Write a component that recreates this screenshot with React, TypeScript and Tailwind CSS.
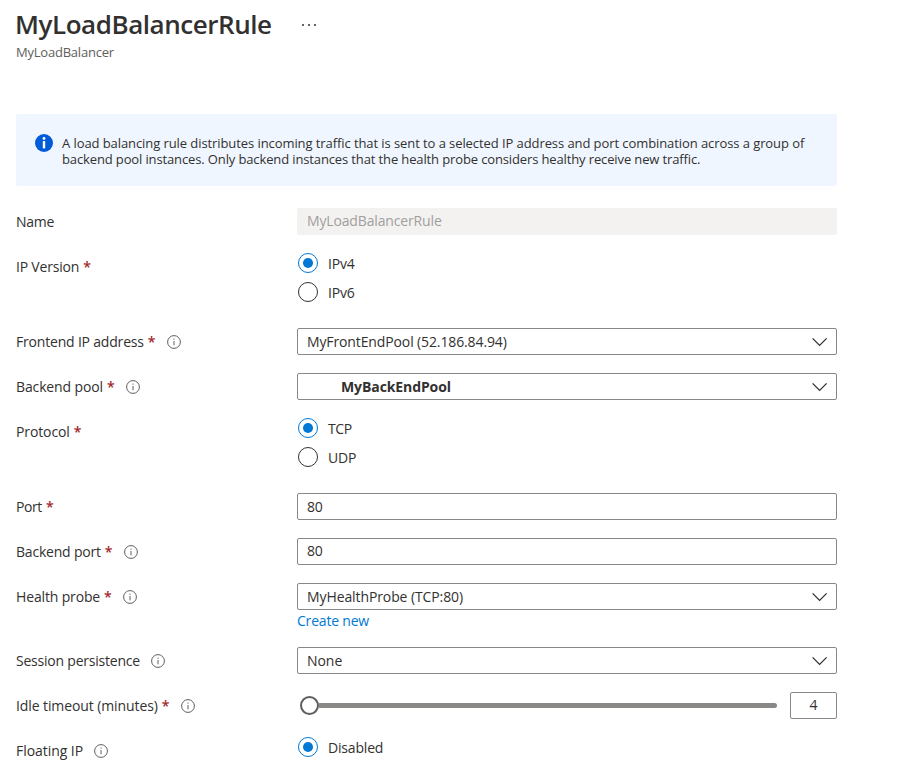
import type { ReactNode } from "react";

function InfoGlyph() {
  return (
    <svg width="14" height="14" viewBox="0 0 14 14" className="ml-[11px] shrink-0" fill="none">
      <circle cx="7" cy="7" r="6.4" stroke="#605e5c" strokeWidth="1" />
      <path d="M7 6v4.3" stroke="#605e5c" strokeWidth="1" />
      <circle cx="7" cy="4.1" r="0.7" fill="#605e5c" />
    </svg>
  );
}

function Row({
  label,
  tracking,
  required,
  info,
  children,
}: {
  label: string;
  tracking: string;
  required?: boolean;
  info?: boolean;
  children: ReactNode;
}) {
  return (
    <div className="grid grid-cols-[281px_540px] items-start">
      <div className="flex h-[27px] items-center whitespace-nowrap">
        <span className={tracking}>{label}</span>
        {required && <span className="ml-1 w-2 font-semibold text-[#a4262c]">*</span>}
        {info && <InfoGlyph />}
      </div>
      <div>{children}</div>
    </div>
  );
}

function Radio({ label, checked, tracking }: { label: string; checked?: boolean; tracking: string }) {
  return (
    <div className="ml-px flex h-5 items-center">
      <span
        className={
          checked
            ? "flex size-5 items-center justify-center rounded-full border border-[#0078d4]"
            : "flex size-5 items-center justify-center rounded-full border border-[#323130]"
        }
      >
        {checked && <span className="size-[10px] rounded-full bg-[#0078d4]" />}
      </span>
      <span className={`ml-[10px] pt-px ${tracking}`}>{label}</span>
    </div>
  );
}

function Box({ children }: { children: ReactNode }) {
  return (
    <div className="flex h-[27px] items-center rounded-[2px] border border-[#8a8886] pr-2 pl-[9px] leading-[25px]">
      {children}
    </div>
  );
}

function Select({ children }: { children: ReactNode }) {
  return (
    <Box>
      {children}
      <svg width="16" height="10" viewBox="0 0 16 10" fill="none" className="ml-auto shrink-0">
        <path d="M0.6 1.4l7 7 7-7" stroke="#323130" strokeWidth="1.3" />
      </svg>
    </Box>
  );
}

export default function App() {
  return (
    <div className="h-[760px] w-[917px] overflow-hidden bg-white pl-4 font-['Open_Sans','Noto_Sans',sans-serif] text-sm text-[#323130]">
      <header className="h-[114px] pt-2">
        <div className="flex h-[33px] items-center">
          <h1 className="-ml-px text-[26px] leading-[33px] font-semibold tracking-[-0.45px]">MyLoadBalancerRule</h1>
          <div className="mt-px ml-[30px] flex gap-1">
            <span className="size-[2px] rounded-full bg-[#323130]" />
            <span className="size-[2px] rounded-full bg-[#323130]" />
            <span className="size-[2px] rounded-full bg-[#323130]" />
          </div>
        </div>
        <p className="mt-[2px] text-[13px] leading-[18px] tracking-[-0.22px] text-[#605e5c]">MyLoadBalancer</p>
      </header>

      <section className="flex h-[72px] w-[821px] rounded-[2px] bg-[#f0f6ff] pt-[21px] pl-[19px]">
        <svg width="18" height="18" viewBox="0 0 18 18" className="-mt-px shrink-0">
          <circle cx="9" cy="9" r="9" fill="#015cda" />
          <rect x="7.8" y="7" width="2.4" height="7.4" fill="#fff" />
          <circle cx="9" cy="4.5" r="1.4" fill="#fff" />
        </svg>
        <p className="ml-[9px] text-[13px] leading-4 whitespace-nowrap">
          <span className="tracking-[-0.08px]">
            A load balancing rule distributes incoming traffic that is sent to a selected IP address and port combination across a group of
          </span>
          <br />
          <span className="tracking-[-0.128px]">
            backend pool instances. Only backend instances that the health probe considers healthy receive new traffic.
          </span>
        </p>
      </section>

      <main className="mt-[22px] flex flex-col gap-[18px]">
        <Row label="Name" tracking="tracking-[-0.3px]">
          <div className="h-[27px] rounded-[2px] bg-[#f3f2f1] pl-[10px] leading-[26px] tracking-[-0.15px] text-[#a19f9d]">
            MyLoadBalancerRule
          </div>
        </Row>
        <Row label="IP Version" tracking="tracking-[-0.2px]" required>
          <div className="flex h-[57px] flex-col gap-[9px]">
            <Radio label="IPv4" tracking="tracking-[-0.2px]" checked />
            <Radio label="IPv6" tracking="tracking-[-0.2px]" />
          </div>
        </Row>
        <Row label="Frontend IP address" tracking="tracking-[-0.19px]" required info>
          <Select>
            <span className="tracking-[-0.122px]">MyFrontEndPool (52.186.84.94)</span>
          </Select>
        </Row>
        <Row label="Backend pool" tracking="tracking-[-0.131px]" required info>
          <Select>
            <span className="ml-[34px] font-bold tracking-[-0.1px]">MyBackEndPool</span>
          </Select>
        </Row>
        <Row label="Protocol" tracking="tracking-[-0.115px]" required>
          <div className="flex h-[57px] flex-col gap-[9px]">
            <Radio label="TCP" tracking="tracking-[-0.4px]" checked />
            <Radio label="UDP" tracking="tracking-[-0.2px]" />
          </div>
        </Row>
        <Row label="Port" tracking="tracking-[-0.4px]" required>
          <Box>
            <span className="tracking-[-0.2px]">80</span>
          </Box>
        </Row>
        <Row label="Backend port" tracking="tracking-[-0.204px]" required info>
          <Box>
            <span className="pb-[2px] tracking-[-0.2px]">80</span>
          </Box>
        </Row>
        <Row label="Health probe" tracking="tracking-[-0.15px]" required info>
          <Select>
            <span className="tracking-[-0.099px]">MyHealthProbe (TCP:80)</span>
          </Select>
          <a className="block h-[19px] leading-[21px] tracking-[-0.2px] text-[#0078d4]">Create new</a>
        </Row>
        <Row label="Session persistence" tracking="tracking-[-0.22px]" info>
          <Select>
            <span className="tracking-[-0.05px]">None</span>
          </Select>
        </Row>
        <Row label="Idle timeout (minutes)" tracking="tracking-[-0.1px]" required info>
          <div className="flex h-[27px] items-center">
            <div className="ml-[3px] flex w-[477px] items-center">
              <span className="size-[19px] shrink-0 rounded-full border-2 border-[#605e5c] bg-white" />
              <span className="h-[5px] grow rounded-r-full bg-[#8a8886]" />
            </div>
            <div className="ml-[13px] flex h-[27px] w-[47px] justify-center rounded-[2px] border border-[#8a8886] leading-[23px]">
              4
            </div>
          </div>
        </Row>
        <Row label="Floating IP" tracking="tracking-[-0.05px]" info>
          <Radio label="Disabled" tracking="tracking-[-0.186px]" checked />
        </Row>
      </main>
    </div>
  );
}
